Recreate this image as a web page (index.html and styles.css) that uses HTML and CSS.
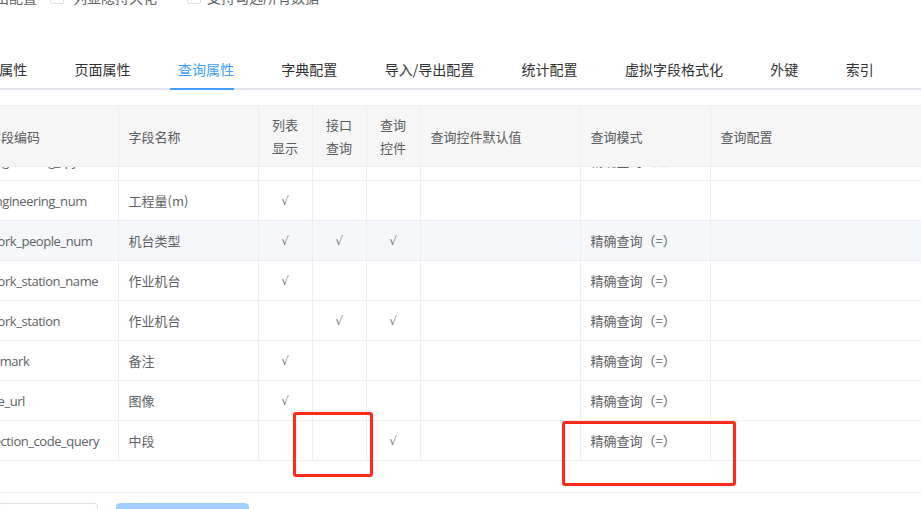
FILE: index.html
```html
<!DOCTYPE html>
<html lang="zh-CN">
<head>
  <meta charset="UTF-8">
  <title>查询属性</title>
  <link rel="stylesheet" href="styles.css">
</head>
<body>
  <div class="opts">
    <span class="opt-label">导出配置</span>
    <label class="check"><span class="box"></span>列显隐持久化</label>
    <label class="check check-wide"><span class="box"></span>支持勾选所有数据</label>
  </div>

  <div class="tabs">
    <div class="tab">字段属性</div>
    <div class="tab">页面属性</div>
    <div class="tab active">查询属性</div>
    <div class="tab">字典配置</div>
    <div class="tab">导入/导出配置</div>
    <div class="tab">统计配置</div>
    <div class="tab">虚拟字段格式化</div>
    <div class="tab">外键</div>
    <div class="tab">索引</div>
  </div>

  <div class="table-wrap">
    <table class="grid grid-head">
      <colgroup>
        <col class="c-code"><col class="c-name"><col class="c-flag"><col class="c-flag"><col class="c-flag">
        <col class="c-default"><col class="c-mode"><col class="c-conf">
      </colgroup>
      <tr>
        <th>字段编码</th>
        <th>字段名称</th>
        <th class="center">列表<br>显示</th>
        <th class="center">接口<br>查询</th>
        <th class="center">查询<br>控件</th>
        <th>查询控件默认值</th>
        <th>查询模式</th>
        <th>查询配置</th>
      </tr>
    </table>

    <div class="grid-body">
      <table class="grid">
        <colgroup>
          <col class="c-code"><col class="c-name"><col class="c-flag"><col class="c-flag"><col class="c-flag">
          <col class="c-default"><col class="c-mode"><col class="c-conf">
        </colgroup>
        <tr>
          <td class="code">engineering_qty</td><td></td><td></td><td></td><td></td><td></td><td>精确查询（=）</td><td></td>
        </tr>
        <tr>
          <td class="code">engineering_num</td><td>工程量(m)</td><td class="tick">√</td><td></td><td></td><td></td><td></td><td></td>
        </tr>
        <tr class="hover">
          <td class="code">work_people_num</td><td>机台类型</td><td class="tick">√</td><td class="tick">√</td><td class="tick">√</td><td></td><td>精确查询（=）</td><td></td>
        </tr>
        <tr>
          <td class="code">work_station_name</td><td>作业机台</td><td class="tick">√</td><td></td><td></td><td></td><td>精确查询（=）</td><td></td>
        </tr>
        <tr>
          <td class="code">work_station</td><td>作业机台</td><td></td><td class="tick">√</td><td class="tick">√</td><td></td><td>精确查询（=）</td><td></td>
        </tr>
        <tr>
          <td class="code">remark</td><td>备注</td><td class="tick">√</td><td></td><td></td><td></td><td>精确查询（=）</td><td></td>
        </tr>
        <tr>
          <td class="code">file_url</td><td>图像</td><td class="tick">√</td><td></td><td></td><td></td><td>精确查询（=）</td><td></td>
        </tr>
        <tr>
          <td class="code">section_code_query</td><td>中段</td><td></td><td></td><td class="tick">√</td><td></td><td>精确查询（=）</td><td></td>
        </tr>
      </table>
    </div>
  </div>

  <div class="footer">
    <button class="btn">取 消</button>
    <button class="btn btn-primary">确 定</button>
  </div>

  <!-- review marks -->
  <div class="mark mark-a"></div>
  <div class="mark mark-b"></div>
</body>
</html>
```

FILE: styles.css
```css
body {
  margin: 0;
  overflow: hidden;
  background: #fff;
  font-family: "Noto Sans CJK SC", sans-serif;
  color: #606266;
}

/* top option row */
.opts {
  display: flex;
  align-items: center;
  height: 20px;
  margin-top: -13px;
  margin-left: -19px;
  font-size: 14px;
}
.opt-label {
  margin-right: 13px;
}
.check {
  display: flex;
  align-items: center;
  margin-right: 30px;
}
.box {
  width: 12px;
  height: 12px;
  border: 1px solid #dcdfe6;
  border-radius: 2px;
  margin-right: 9px;
}
.check-wide .box {
  margin-right: 6px;
}

/* tabs */
.tabs {
  display: flex;
  margin-top: 43px;
  margin-left: -52.5px;
  height: 40px;
  border-bottom: 2px solid #e4e7ed;
  box-sizing: border-box;
  width: 1000px;
}
.tab {
  position: relative;
  padding: 0 23.7px;
  line-height: 38px;
  font-size: 14px;
  color: #303133;
  white-space: nowrap;
}
.tab.active {
  color: #409eff;
}
.tab.active::after {
  content: "";
  position: absolute;
  left: 15.5px;
  right: 23.5px;
  bottom: -2px;
  height: 2px;
  background: #409eff;
}

/* table */
.table-wrap {
  margin-top: 15px;
  margin-left: -22px;
  width: 1100px;
}
.grid {
  width: 1100px;
  table-layout: fixed;
  border-collapse: collapse;
  font-size: 13px;
}
.grid-head {
  border-top: 1px solid #ebeef5;
}
.c-code { width: 140px; }
.c-name { width: 140px; }
.c-flag { width: 54px; }
.c-default { width: 160px; }
.c-mode { width: 130px; }
.c-conf { width: auto; }

.grid th,
.grid td {
  border-right: 1px solid #ebeef5;
  border-bottom: 1px solid #ebeef5;
  padding: 0 10px;
  text-align: left;
  white-space: nowrap;
  overflow: hidden;
}
.grid th {
  height: 60px;
  line-height: 23px;
  font-weight: normal;
  background: #f6f6f6;
  color: #5a5c61;
}
.grid td {
  height: 39px;
}
.grid .center {
  text-align: center;
}
.grid .tick {
  text-align: center;
  font-family: "DejaVu Sans", sans-serif;
  font-size: 12px;
  color: #777;
}
.grid tr.hover td {
  background: #f5f7fa;
}
.code {
  font-family: "Open Sans", "Noto Sans CJK SC", sans-serif;
  letter-spacing: -0.45px;
}

.grid-body {
  height: 294px;
  overflow: hidden;
}
.grid-body .grid {
  margin-top: -26px;
}

/* footer */
.footer {
  margin-top: 31px;
  border-top: 1px solid #ebeef5;
  padding-top: 10px;
  display: flex;
}
.btn {
  height: 32px;
  border-radius: 4px;
  font-size: 14px;
  font-family: inherit;
  border: 1px solid #dcdfe6;
  background: #fff;
  color: #606266;
  width: 100px;
  margin-left: -2px;
}
.btn-primary {
  width: 133px;
  margin-left: 18px;
  background: #a0cfff;
  border-color: #a0cfff;
  color: #fff;
}

/* red review marks */
.mark {
  position: absolute;
  border: 3px solid #ff2a1a;
  border-radius: 3px;
  box-sizing: border-box;
}
.mark-a {
  left: 293px;
  top: 412px;
  width: 80px;
  height: 65px;
}
.mark-b {
  left: 562px;
  top: 421px;
  width: 174px;
  height: 65px;
}
```
